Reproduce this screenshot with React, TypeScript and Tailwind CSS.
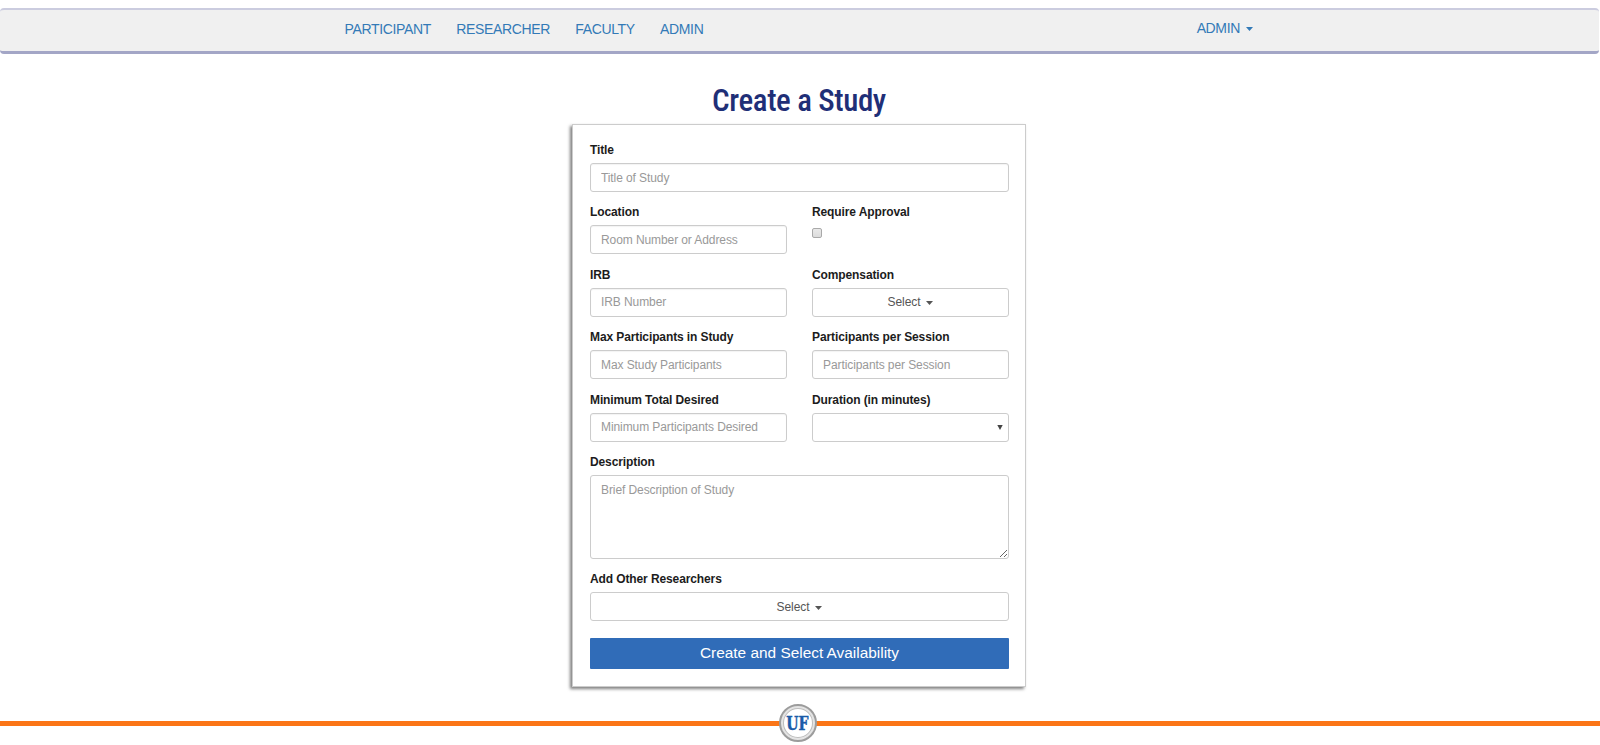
import React from "react";

const control =
  "block w-full h-[29px] rounded-[3px] border border-[#cccccc] bg-white px-[10px] text-[12px] tracking-[-0.09px] text-[#555555] placeholder:text-[#999999] placeholder:opacity-100 shadow-[inset_0_1px_1px_rgba(0,0,0,0.05)] outline-none";

const navLinks = ["PARTICIPANT", "RESEARCHER", "FACULTY", "ADMIN"];

function Caret() {
  return (
    <svg className="ml-[6px] mt-[2px]" width="7" height="4" viewBox="0 0 7 4" fill="currentColor">
      <path d="M0 0h7L3.5 4z" />
    </svg>
  );
}

function Field({ label, children }: { label: string; children: React.ReactNode }) {
  return (
    <div className="min-w-0">
      <label className="mb-[4px] block h-[17px] whitespace-nowrap text-[12px] font-bold leading-[17px] tracking-[-0.11px] text-[#1c1c1c]">
        {label}
      </label>
      {children}
    </div>
  );
}

function SelectButton() {
  return (
    <button type="button" className="flex h-[29px] w-full items-center justify-center rounded-[3px] border border-[#cccccc] bg-white text-[12px] tracking-[-0.09px] text-[#555555]">
      Select
      <Caret />
    </button>
  );
}

function Navbar() {
  return (
    <nav className="mt-2 h-[46px] w-[1599px] rounded-[4px] border-b-[3px] border-t-2 border-b-[#a3a6c6] border-t-[#cbccdf] bg-[#f0f0f0]">
      <div className="flex h-full pl-[344.5px] text-[14px] leading-[20px] tracking-[-0.35px] text-[#337ab7]">
        <div className="flex gap-[25.3px] pt-[9px]">
          {navLinks.map((name) => (
            <a key={name} href="#">{name}</a>
          ))}
        </div>
        <a href="#" className="ml-auto mr-[346px] flex items-center self-start pt-[8px]">
          ADMIN
          <Caret />
        </a>
      </div>
    </nav>
  );
}

function StudyForm() {
  return (
    <form className="mx-auto mt-[3px] grid h-[563px] w-[454px] grid-cols-[197px_197px] content-start gap-x-[25px] gap-y-[12.4px] border border-[#cccccc] bg-white pl-[17px] pr-[16px] pt-[17px] shadow-[-2px_2px_3px_rgba(0,0,0,0.5)]">
      <div className="col-span-2">
        <Field label="Title"><input className={control} placeholder="Title of Study" /></Field>
      </div>
      <Field label="Location"><input className={control} placeholder="Room Number or Address" /></Field>
      <Field label="Require Approval">
        <button type="button" aria-label="Require Approval" className="mt-[7px] block size-[10px] rounded-[2px] border border-[#a9a9a9] bg-linear-to-b from-[#e9e9e9] to-[#dcdcdc]" />
      </Field>
      <Field label="IRB"><input className={control} placeholder="IRB Number" /></Field>
      <Field label="Compensation"><SelectButton /></Field>
      <Field label="Max Participants in Study"><input className={control} placeholder="Max Study Participants" /></Field>
      <Field label="Participants per Session"><input className={control} placeholder="Participants per Session" /></Field>
      <Field label="Minimum Total Desired"><input className={control} placeholder="Minimum Participants Desired" /></Field>
      <Field label="Duration (in minutes)">
        <button type="button" aria-label="Duration" className="flex h-[29px] w-full items-center justify-end rounded-[3px] border border-[#cccccc] bg-white pr-[5px]">
          <svg width="6" height="5" viewBox="0 0 6 5" fill="#444"><path d="M0.3 0h5.4L3 5z" /></svg>
        </button>
      </Field>
      <div className="col-span-2">
        <Field label="Description">
          <textarea className="block h-[84px] w-full resize rounded-[3px] border border-[#cccccc] bg-white px-[10px] py-[5px] text-[12px] leading-[18px] tracking-[-0.09px] outline-none placeholder:text-[#999999] placeholder:opacity-100" placeholder="Brief Description of Study" />
        </Field>
      </div>
      <div className="col-span-2">
        <Field label="Add Other Researchers"><SelectButton /></Field>
      </div>
      <button type="button" className="col-span-2 mt-[4px] h-[31px] rounded-[1px] bg-[#306cb8] pb-px text-[15.4px] text-white">
        Create and Select Availability
      </button>
    </form>
  );
}

function Footer() {
  return (
    <footer className="relative mt-[17px] flex h-[38px] items-center justify-center">
      <div className="absolute inset-x-0 top-[17px] h-[5px] bg-[#fb7516]" />
      <div className="relative mr-[5px] flex size-[38px] items-center justify-center rounded-full border-2 border-[#9c9c9c] bg-white shadow-[inset_0_0_0_2px_#e4e4e4,inset_0_0_0_3px_#bdbdbd]">
        <span className="mt-px scale-x-[0.78] font-['DejaVu_Serif'] text-[18px] font-bold leading-none text-[#1a5ba8] [-webkit-text-stroke:0.5px_#1a5ba8]">UF</span>
      </div>
    </footer>
  );
}

export default function App() {
  return (
    <div className="flow-root h-[745px] overflow-hidden bg-white font-['Liberation_Sans',Arial,sans-serif]">
      <Navbar />
      <main className="w-[1598px]">
        <h1 className="mt-[26px] flex h-[41px] items-center justify-center whitespace-nowrap font-['Roboto_Condensed','Roboto',sans-serif] text-[31px] font-medium leading-[41px] tracking-[-0.4px] text-[#1f2f77]">
          <span className="inline-block [font-stretch:75%]">Create a Study</span>
        </h1>
        <StudyForm />
      </main>
      <Footer />
    </div>
  );
}
